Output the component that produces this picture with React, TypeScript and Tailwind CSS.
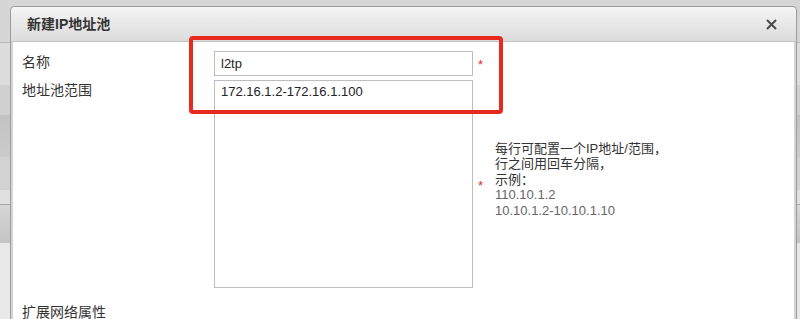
import React from 'react';

const font = { fontFamily: '"Liberation Sans", "Noto Sans CJK SC", Arial, sans-serif' };

const Star = ({ className = '' }: { className?: string }) => (
  <span className={`ml-[5px] w-[17px] text-[13px] leading-none text-[#e02b2b] ${className}`}>*</span>
);

export default function App() {
  return (
    <div className="relative h-[319px] w-[800px] overflow-hidden bg-[#e6e6e6]" style={font}>
      {/* page behind the modal */}
      <div className="flex h-full flex-col">
        <div className="h-[42px] bg-[#d6d6d6]" />
        <div className="h-[1px] bg-[#b8b8b8]" />
        <div className="h-[42px] bg-[#dcdcdc]" />
        <div className="h-[30px] bg-[#d0d0d0]" />
        <div className="h-[42px] bg-gradient-to-b from-[#c2c2c2] to-[#cbcbcb]" />
        <div className="h-[33px] bg-[#d2d2d2]" />
        <div className="h-[14px] bg-[#e0e0e0]" />
        <div className="h-[1px] bg-[#a8a8a8]" />
        <div className="h-[38px] bg-gradient-to-b from-[#d6d6d6] to-[#c4c4c4]" />
        <div className="flex-1 bg-[#e8e8e8]" />
      </div>

      {/* modal */}
      <div className="absolute left-[10px] top-[6px] flex h-[330px] w-[787px] flex-col rounded-t-[4px] border border-[#9c9c9c] bg-[#d4d4d4]">
        <div className="flex h-[35px] items-center justify-between rounded-t-[4px] border-b border-[#c2c2c2] bg-gradient-to-b from-[#f4f4f4] to-[#dcdcdc] pl-[16px] pr-[19px]">
          <span className="text-[14px] font-bold text-[#333]">新建IP地址池</span>
          <svg width="11" height="11" viewBox="0 0 11 11">
            <path d="M1 1L10 10M10 1L1 10" stroke="#4a4a4a" strokeWidth="2" />
          </svg>
        </div>
        <div className="mx-[2px] flex-1 bg-white pl-[9px] pt-[9px] text-[#333]">
          <div className="flex items-start">
            <div className="w-[192px] pt-[3px] text-[14px] leading-[16px]">名称</div>
            <div className="flex h-[25px] w-[259px] items-center border border-[#bdbdbd] px-[6px] text-[13px] text-[#222]">
              l2tp
            </div>
            <Star className="mt-[7px]" />
          </div>
          <div className="mt-[4px] flex items-start">
            <div className="w-[192px] pt-[2px] text-[14px] leading-[16px]">地址池范围</div>
            <div className="h-[208px] w-[259px] border border-[#bdbdbd] px-[6px] pt-[3px] text-[13px] leading-[16px] text-[#222]">
              172.16.1.2-172.16.1.100
            </div>
            <div className="flex h-[208px] items-center">
              <Star className="mt-[2px]" />
              <div className="pb-[9px] text-[13px] leading-[15.5px]">
                <div>每行可配置一个IP地址/范围，</div>
                <div>行之间用回车分隔，</div>
                <div>示例：</div>
                <div className="text-[#666]">110.10.1.2</div>
                <div className="text-[#666]">10.10.1.2-10.10.1.10</div>
              </div>
            </div>
          </div>
          <div className="mt-[16px] text-[14px] leading-[16px]">扩展网络属性</div>
        </div>
      </div>

      {/* annotation highlight */}
      <div className="absolute left-[189px] top-[36px] h-[78px] w-[314px] rounded-[4px] border-[4px] border-[#e8291f]" />
    </div>
  );
}
